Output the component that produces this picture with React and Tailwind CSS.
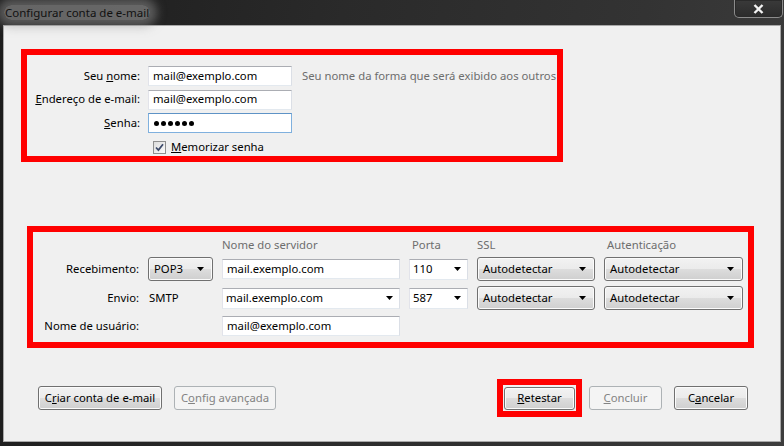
import React from 'react';

const btnBg =
  'border border-[#707070] rounded-[3px] bg-[linear-gradient(#f2f2f2_0%,#ebebeb_49%,#dddddd_50%,#cfcfcf_100%)] shadow-[inset_0_0_0_1px_#fbfbfb]';
const boxBorder =
  'border border-[#abadb3] border-l-[#e2e3ea] border-r-[#dbdfe6] border-b-[#e3e9ef] bg-white';

const Arrow = () => (
  <svg width="7" height="4" viewBox="0 0 7 4" className="shrink-0">
    <path d="M0 0h7L3.5 4z" fill="#000" />
  </svg>
);

const TextBox = ({ children, className = '' }) => (
  <div className={`h-[20px] shrink-0 flex items-center pl-[4px] ${boxBorder} ${className}`}>{children}</div>
);

const Combo = ({ value, className = '' }) => (
  <div className={`h-[21px] flex items-center justify-between pl-[3px] pr-[6px] ${boxBorder} ${className}`}>
    <span>{value}</span>
    <Arrow />
  </div>
);

const DropButton = ({ value, className = '' }) => (
  <div className={`h-[24px] flex items-center justify-between pl-[5px] pr-[8px] ${btnBg} ${className}`}>
    <span>{value}</span>
    <Arrow />
  </div>
);

const Button = ({ children, className = '', disabled }) => (
  <button
    className={`h-[24px] shrink-0 flex items-center justify-center ${
      disabled
        ? 'border border-[#adb2b5] rounded-[3px] bg-[#f4f4f4] text-[#838383]'
        : btnBg + ' text-black'
    } ${className}`}
  >
    {children}
  </button>
);

const Header = ({ children }) => <div className="text-[#6d6d6d] leading-[15px]">{children}</div>;

export default function App() {
  return (
    <div className="w-[784px] h-[446px] overflow-hidden bg-[linear-gradient(100deg,#1c1c1c_0%,#2a2a2a_40%,#333333_75%,#3d3d3d_100%)] font-['Noto_Sans','DejaVu_Sans',sans-serif] text-[11.3px] text-black">
      {/* title bar */}
      <div className="h-[25px] flex justify-between">
        <div className="flex items-center pl-[4px]">
          <span className="text-[11.5px] leading-[15px] px-[1px] rounded-full bg-[rgba(150,150,150,0.6)] shadow-[0_0_10px_7px_rgba(150,150,150,0.5)] text-[#111]">
            Configurar conta de e-mail
          </span>
        </div>
        <div className="mr-[1px] w-[49px] h-[18px] border border-t-0 border-[#8c8c8c] rounded-b-[5px] shadow-[inset_0_0_0_1px_#2a2a2a] bg-[linear-gradient(#3a3a3a,#2b2b2b)] flex items-center justify-center">
          <svg width="11" height="10" viewBox="0 0 11 10">
            <path d="M1.5 1l8 8M9.5 1l-8 8" stroke="#f2f2f2" strokeWidth="2.4" />
          </svg>
        </div>
      </div>

      {/* client area */}
      <div className="ml-[3px] w-[778px] h-[417px] border border-[#a8a8a8] bg-[#f0f0f0] flex flex-col">
        {/* identity */}
        <div className="ml-[17px] mt-[23px] w-[542px] h-[113px] border-[6px] border-[#ff0000] pt-[11px] flex flex-col">
          <div className="flex flex-col gap-[3.5px]">
            <div className="flex items-center h-[20px]">
              <div className="w-[113px] shrink-0 text-right">
                Seu <u>n</u>ome:
              </div>
              <TextBox className="ml-[8px] w-[144px]">mail@exemplo.com</TextBox>
              <div className="ml-[10px] text-[#6d6d6d] whitespace-nowrap">Seu nome da forma que será exibido aos outros</div>
            </div>
            <div className="flex items-center h-[20px]">
              <div className="w-[113px] shrink-0 text-right">
                <u>E</u>ndereço de e-mail:
              </div>
              <TextBox className="ml-[8px] w-[144px]">mail@exemplo.com</TextBox>
            </div>
            <div className="flex items-center h-[20px]">
              <div className="w-[113px] shrink-0 text-right">
                <u>S</u>enha:
              </div>
              <div className="ml-[8px] w-[144px] h-[20px] flex items-center gap-[2px] pl-[5px] bg-white border border-[#7fb0de] border-t-[#5e93c6]">
                {[0, 1, 2, 3, 4, 5].map((i) => (
                  <span key={i} className="w-[5px] h-[5px] rounded-full bg-black" />
                ))}
              </div>
            </div>
          </div>
          <div className="mt-[8px] ml-[126px] flex items-center h-[13px]">
            <div className="w-[13px] h-[13px] border border-[#8f8f8f] bg-[linear-gradient(135deg,#dcdcdc,#fbfbfb)] flex items-center justify-center">
              <svg width="9" height="9" viewBox="0 0 9 9">
                <path d="M1 4.5l2.4 2.6L8 1.2" stroke="#3c4a6a" strokeWidth="1.7" fill="none" />
              </svg>
            </div>
            <span className="ml-[5px]">
              <u>M</u>emorizar senha
            </span>
          </div>
        </div>

        {/* servers */}
        <div className="ml-[23px] mt-[64px] w-[727px] h-[122px] border-[6px] border-[#ff0000] pt-[5px]">
          <div className="grid grid-cols-[106px_65px_178px_59px_118px_139px] gap-x-[9px] gap-y-[5px] items-center">
            <div />
            <div />
            <Header>Nome do servidor</Header>
            <Header>
              <span className="pl-[3px]">Porta</span>
            </Header>
            <Header>SSL</Header>
            <Header>
              <span className="pl-[3px]">Autenticação</span>
            </Header>

            <div className="text-right">Recebimento:</div>
            <DropButton value="POP3" />
            <TextBox className="w-full">mail.exemplo.com</TextBox>
            <Combo value="110" />
            <DropButton value="Autodetectar" />
            <DropButton value="Autodetectar" />

            <div className="text-right h-[24px] leading-[24px]">Envio:</div>
            <div className="pl-[1px]">SMTP</div>
            <Combo value="mail.exemplo.com" />
            <Combo value="587" />
            <DropButton value="Autodetectar" />
            <DropButton value="Autodetectar" />

            <div className="text-right h-[22px] leading-[22px] whitespace-nowrap">Nome de usuário:</div>
            <div />
            <TextBox className="w-full">mail@exemplo.com</TextBox>
            <div />
            <div />
            <div />
          </div>
        </div>

        {/* buttons */}
        <div className="mt-[31px] h-[38px] flex items-center pl-[34px] pr-[32px]">
          <Button className="w-[124px]">
            C<u>r</u>iar conta de e-mail
          </Button>
          <Button className="ml-[12px] w-[102px]" disabled>
            C<u>o</u>nfig avançada
          </Button>
          <div className="ml-auto border-[6px] border-[#ff0000] pt-[2px] pb-[1px] px-[1px]">
            <Button className="w-[71px] !h-[23px]">
              <u>R</u>etestar
            </Button>
          </div>
          <Button className="ml-[7px] w-[73px]" disabled>
            <u>C</u>oncluir
          </Button>
          <Button className="ml-[12px] w-[74px]">
            C<u>a</u>ncelar
          </Button>
        </div>
      </div>
    </div>
  );
}
